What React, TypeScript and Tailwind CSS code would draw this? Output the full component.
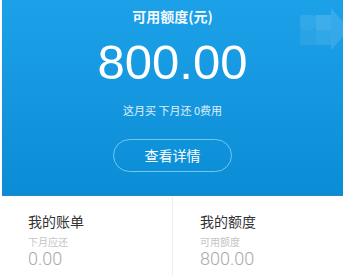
import React from "react";

const cjk = "font-['Noto_Sans_CJK_SC',sans-serif]";

export default function App() {
  return (
    <div className="relative w-[345px] h-[276px] bg-white overflow-hidden px-[2px] font-['Liberation_Sans','Noto_Sans_CJK_SC',sans-serif]">
      <div className="h-[196px] flex flex-col items-center bg-gradient-to-b from-[#1ca1e9] to-[#0b8dd6] border-b border-[#2f86bd]">
        <div className="mt-[6px] h-[20px] leading-[20px] text-[14px] font-bold text-[#f2f9ff] font-['Noto_Sans_CJK_SC',sans-serif]">可用额度(元)</div>
        <div className="mt-[12px] h-[49px] leading-[49px] text-[49px] text-white">800.00</div>
        <div className="mt-[15px] h-[16px] leading-[16px] text-[11px] text-white/85 font-['Noto_Sans_CJK_SC',sans-serif]">这月买 下月还 0费用</div>
        <div className="mt-[21px] w-[119px] h-[33px] rounded-full border border-[#6fc8f6] flex items-center justify-center text-[14px] text-white font-['Noto_Sans_CJK_SC',sans-serif]">查看详情</div>
      </div>
      <div className="flex h-[80px]">
        <div className="w-[171px] pl-[26px] pt-[15px] border-r border-[#eeeeee] flex flex-col">
          <div className="h-[20px] leading-[20px] text-[14px] text-[#333333] font-['Noto_Sans_CJK_SC',sans-serif]">我的账单</div>
          <div className="mt-[4px] h-[13px] leading-[13px] text-[10px] text-[#c4c4c4] font-['Noto_Sans_CJK_SC',sans-serif]">下月应还</div>
          <div className="mt-[2px] h-[18px] leading-[18px] text-[18px] font-light text-[#aaaaaa] font-['Roboto',sans-serif]">0.00</div>
        </div>
        <div className="flex-1 pl-[27px] pt-[15px] flex flex-col">
          <div className="h-[20px] leading-[20px] text-[14px] text-[#333333] font-['Noto_Sans_CJK_SC',sans-serif]">我的额度</div>
          <div className="mt-[4px] h-[13px] leading-[13px] text-[10px] text-[#c4c4c4] font-['Noto_Sans_CJK_SC',sans-serif]">可用额度</div>
          <div className="mt-[2px] h-[18px] leading-[18px] text-[18px] font-light text-[#aaaaaa] font-['Roboto',sans-serif]">800.00</div>
        </div>
      </div>
      <svg className="absolute left-[300px] top-[8px]" width="45" height="43" viewBox="0 0 45 43">
        <rect x="0" y="7" width="16" height="15" rx="4" fill="#ffffff" fillOpacity="0.1" />
        <rect x="16" y="7" width="15" height="15" fill="#ffffff" fillOpacity="0.16" />
        <rect x="0" y="22" width="16" height="15" fill="#ffffff" fillOpacity="0.07" />
        <rect x="16" y="22" width="15" height="15" fill="#ffffff" fillOpacity="0.1" />
        <path d="M31 0 L43 14 L43 29 L31 42 Z" fill="#ffffff" fillOpacity="0.12" />
      </svg>
    </div>
  );
}
